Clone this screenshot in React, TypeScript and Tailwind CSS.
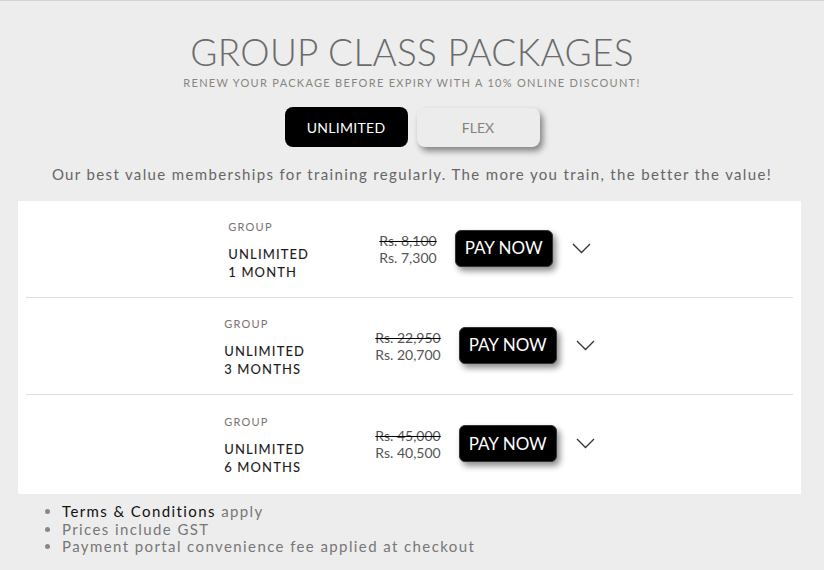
import React from "react";

const rows = [
  { dur: "1 MONTH", old: "Rs. 8,100", now: "Rs. 7,300" },
  { dur: "3 MONTHS", old: "Rs. 22,950", now: "Rs. 20,700" },
  { dur: "6 MONTHS", old: "Rs. 45,000", now: "Rs. 40,500" },
];

export default function App() {
  return (
    <div className="w-[824px] h-[570px] bg-[#ededed] border-t border-[#d2d2d2] overflow-hidden" style={{ fontFamily: "Lato, 'Noto Sans', sans-serif" }}>
      <div className="flex flex-col items-center">
        <h1 className="mt-[29px] text-[37px] leading-[44px] font-light text-[#6b6b6b] tracking-[0.3px]">GROUP CLASS PACKAGES</h1>
        <p className="mt-[2px] text-[11px] leading-[14px] tracking-[1.3px] text-[#8a8580]">RENEW YOUR PACKAGE BEFORE EXPIRY WITH A 10% ONLINE DISCOUNT!</p>
        <div className="mt-[17px] flex gap-[9px]">
          <button className="w-[123px] h-[40px] rounded-[8px] bg-black text-white text-[14px] tracking-[0.3px]">UNLIMITED</button>
          <button className="w-[123px] h-[39px] mt-[1px] rounded-[8px] bg-[#ececec] text-[#8a7f78] text-[14px] shadow-[3px_4px_6px_rgba(0,0,0,0.45)]">FLEX</button>
        </div>
        <p className="mt-[17px] text-[15px] leading-[20px] tracking-[1.35px] text-[#666]">Our best value memberships for training regularly. The more you train, the better the value!</p>
      </div>
      <div className="mt-[17px] mx-[18px] w-[783px] bg-white px-[8px]">
        {rows.map((r, i) => (
          <div key={i} className={`flex items-center justify-center ${i < 2 ? "h-[97px] border-b border-[#dcdcdc]" : "h-[99px]"}`}>
            <div className="w-[151px] flex flex-col mt-[2px]">
              <span className="text-[11px] leading-[14px] tracking-[1.2px] text-[#7a7470]">GROUP</span>
              <span className="mt-[11px] text-[13px] leading-[18px] tracking-[1.1px] text-[#1e1e1e] font-medium">UNLIMITED</span>
              <span className="text-[13px] leading-[18px] tracking-[1.1px] text-[#1e1e1e] font-medium">{r.dur}</span>
            </div>
            <div className="flex flex-col items-start text-[14px] leading-[17px] text-[#555] mt-[-1px]">
              <span className="line-through decoration-black">{r.old}</span>
              <span>{r.now}</span>
            </div>
            <button className="ml-[18px] w-[98px] h-[37px] rounded-[6px] bg-black text-white text-[17px] mt-[-2px] shadow-[3px_4px_6px_rgba(0,0,0,0.45)] border border-[#333]">PAY NOW</button>
            <svg className="ml-[19px] mt-[-2px]" width="19" height="11" viewBox="0 0 19 11" fill="none">
              <path d="M1 1 L9.5 9.5 L18 1" stroke="#333" strokeWidth="1.3" />
            </svg>
          </div>
        ))}
      </div>
      <ul className="mt-[9px] ml-[62px] list-disc text-[15px] leading-[17.5px] tracking-[1.4px] text-[#777] marker:text-[#888]">
        <li><span className="text-[#111]">Terms &amp; Conditions</span> apply</li>
        <li>Prices include GST</li>
        <li>Payment portal convenience fee applied at checkout</li>
      </ul>
    </div>
  );
}
